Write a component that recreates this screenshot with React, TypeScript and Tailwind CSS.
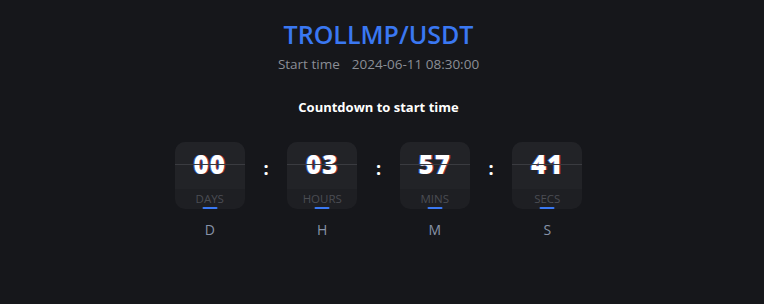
import React from "react";

const units = [
  { v: "00", l: "DAYS", s: "D" },
  { v: "03", l: "HOURS", s: "H" },
  { v: "57", l: "MINS", s: "M" },
  { v: "41", l: "SECS", s: "S" },
];

function Card({ v, l, s }: { v: string; l: string; s: string }) {
  return (
    <div className="flex flex-col items-center w-[70px]">
      <div className="w-[70px] h-[67px] rounded-[10px] overflow-hidden bg-[#1e1f23] flex flex-col relative">
        <div className="h-[47px] bg-[#222327] relative flex items-start justify-center">
          <span className="mt-[8px] text-[26px] font-extrabold tracking-[1px] text-white leading-[28px] [text-shadow:-1px_0_0_rgba(60,120,240,0.7),1px_0_0_rgba(230,60,60,0.7)]">
            {v}
          </span>
          <div className="absolute left-0 right-0 top-[22px] h-px bg-[#3a3b40]" />
        </div>
        <div className="flex-1 flex items-start justify-center">
          <span className="text-[11.5px] text-[#4b4d53] leading-none mt-[4px]">{l}</span>
        </div>
        <div className="absolute bottom-0 left-1/2 -translate-x-1/2 w-[15px] h-[2px] rounded-full bg-[#3a78f2]" />
      </div>
      <div className="mt-[14px] text-[14px] text-[#8793a8] leading-none">{s}</div>
    </div>
  );
}

export default function App() {
  return (
    <div className="w-[764px] h-[304px] bg-[#16171b]">
      <div
        className="w-[757px] flex flex-col items-center"
        style={{ fontFamily: '"Open Sans", "Noto Sans", sans-serif' }}
      >
        <div className="mt-[19px] text-[25px] font-semibold text-[#3a78f2] leading-[30px]">TROLLMP/USDT</div>
        <div className="mt-[5px] flex gap-[12px] text-[13.5px] text-[#8b8e96] leading-[20px]">
          <span>Start time</span>
          <span>2024-06-11 08:30:00</span>
        </div>
        <div className="mt-[24px] text-[13px] font-bold text-white leading-[18px]">Countdown to start time</div>
        <div className="mt-[26px] flex items-start">
          {units.map((u, i) => (
            <React.Fragment key={u.l}>
              {i > 0 && (
                <div className="w-[42.5px] h-[52px] flex items-center justify-center text-white font-bold text-[18px]">:</div>
              )}
              <Card {...u} />
            </React.Fragment>
          ))}
        </div>
      </div>
    </div>
  );
}
